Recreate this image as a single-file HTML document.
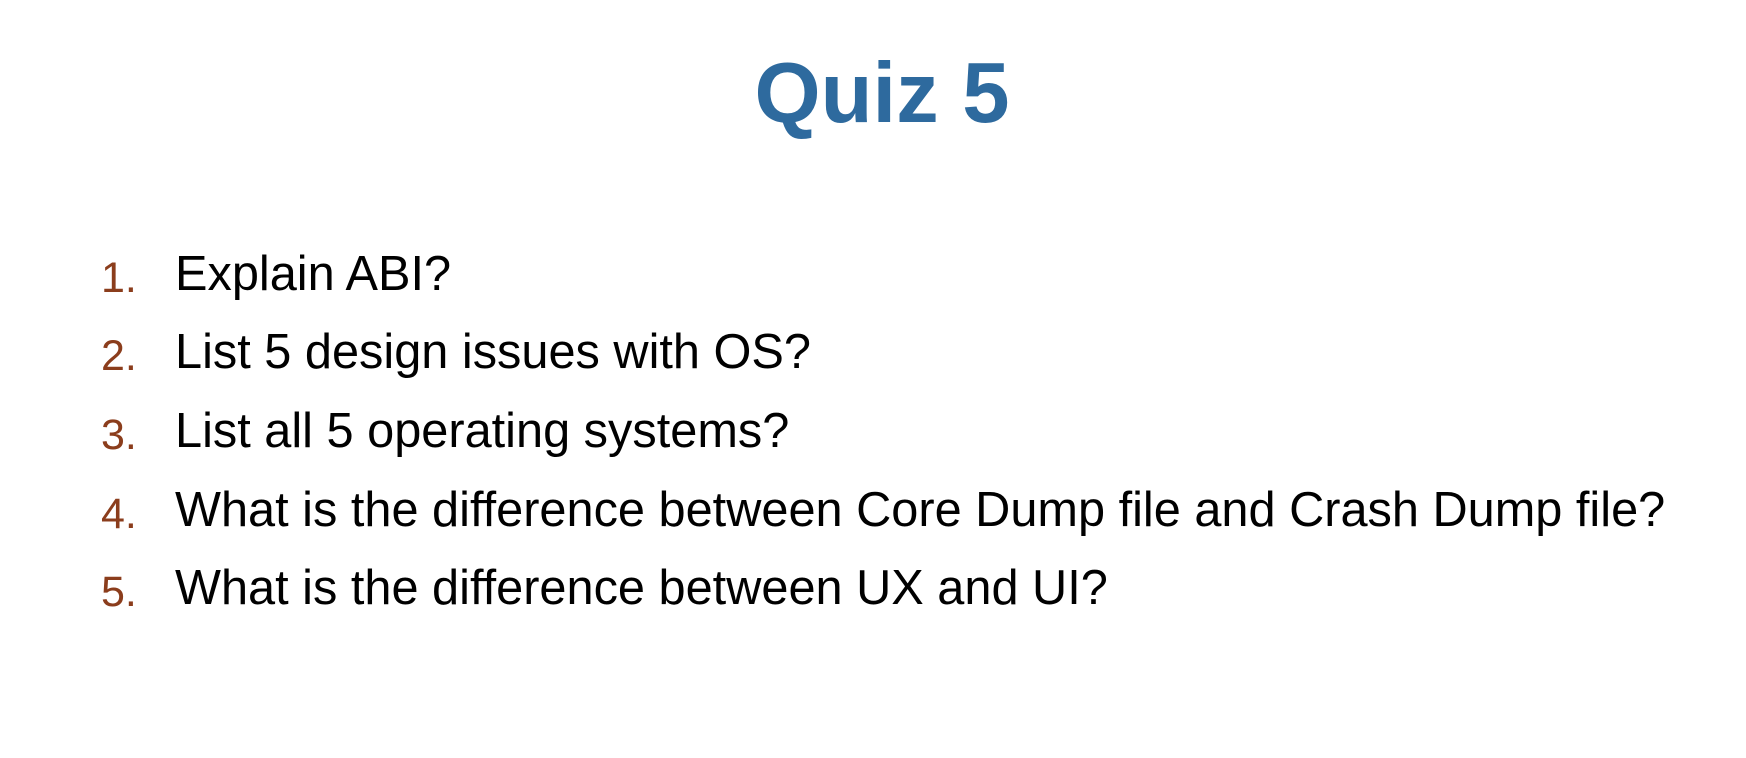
<!DOCTYPE html>
<html><head><meta charset="utf-8"><style>
html,body{margin:0;padding:0;background:#fff;width:1746px;height:758px;overflow:hidden;font-family:"Liberation Sans",Arial,sans-serif}
.t{position:absolute;left:0;width:1764px;text-align:center;top:44px;font-size:85px;line-height:100px;font-weight:bold;color:#2E6A9E}
.n,.x{position:absolute;line-height:50px;white-space:nowrap}
.n{left:101px;font-size:43px;color:#8B3D1C}
.x{left:175px;font-size:48.7px;color:#000}
</style></head><body>
<div class="t">Quiz 5</div>
<div class="n" style="top:253px">1.</div><div class="x" style="top:249px">Explain ABI?</div>
<div class="n" style="top:331px">2.</div><div class="x" style="top:327px">List 5 design issues with OS?</div>
<div class="n" style="top:410px">3.</div><div class="x" style="top:406px">List all 5 operating systems?</div>
<div class="n" style="top:489px">4.</div><div class="x" style="top:485px">What is the difference between Core Dump file and Crash Dump file?</div>
<div class="n" style="top:567px">5.</div><div class="x" style="top:563px">What is the difference between UX and UI?</div>
</body></html>
